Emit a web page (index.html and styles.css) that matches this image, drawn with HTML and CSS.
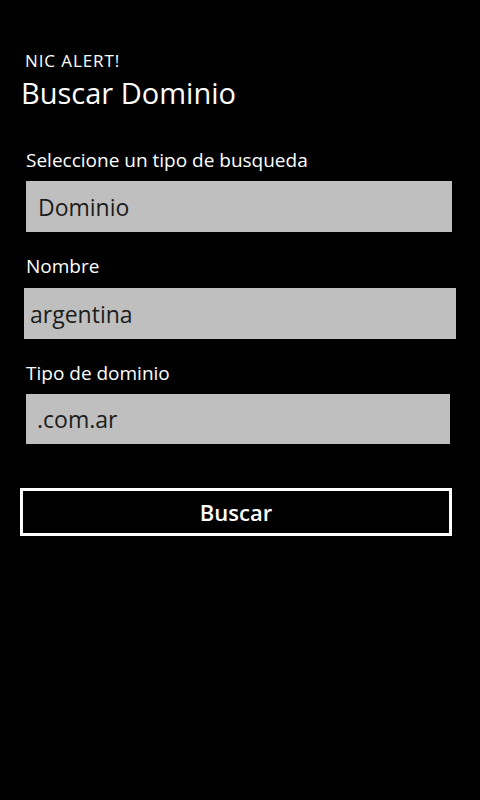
FILE: index.html
```html
<!DOCTYPE html>
<html lang="es">
<head>
<meta charset="utf-8">
<title>Buscar Dominio</title>
<link rel="stylesheet" href="styles.css">
</head>
<body>
<div class="page">
  <header class="header">
    <div class="app-title">NIC ALERT!</div>
    <h1 class="page-title">Buscar Dominio</h1>
  </header>
  <form class="form">
    <div class="label label-first">Seleccione un tipo de busqueda</div>
    <div class="field field-picker">Dominio</div>
    <div class="label">Nombre</div>
    <div class="field field-text">argentina</div>
    <div class="label">Tipo de dominio</div>
    <div class="field field-picker2">.com.ar</div>
    <div class="button">Buscar</div>
  </form>
</div>
</body>
</html>
```

FILE: styles.css
```css
html, body {
  margin: 0;
  padding: 0;
  background: #000;
}
body {
  width: 480px;
  height: 800px;
  color: #fff;
  font-family: "Open Sans", "Noto Sans", sans-serif;
}
.page {
  padding-top: 49px;
}
.app-title {
  margin-left: 25px;
  font-size: 17px;
  letter-spacing: 0.9px;
  line-height: 24px;
}
.page-title {
  margin: 2px 0 0 21px;
  font-size: 29px;
  font-weight: 400;
  line-height: 35px;
}
.form {
  display: block;
}
.label {
  margin: 22px 0 0 26px;
  font-size: 19px;
  line-height: 24px;
}
.label-first {
  margin-top: 38px;
}
.field {
  display: flex;
  align-items: center;
  height: 51px;
  margin-top: 9px;
  background: #bfbfbf;
  color: #1c1c1c;
  font-size: 23px;
}
.field-picker {
  margin-left: 26px;
  width: 414px;
  padding-left: 12px;
}
.field-text {
  margin-top: 10px;
  margin-left: 24px;
  width: 426px;
  padding-left: 6px;
}
.field-picker2 {
  margin-left: 26px;
  width: 413px;
  padding-left: 11px;
  height: 50px;
}
.button {
  display: flex;
  align-items: center;
  justify-content: center;
  box-sizing: border-box;
  margin: 44px 0 0 20px;
  width: 432px;
  height: 48px;
  border: 3px solid #fff;
  font-size: 22px;
  font-weight: 600;
}
```
